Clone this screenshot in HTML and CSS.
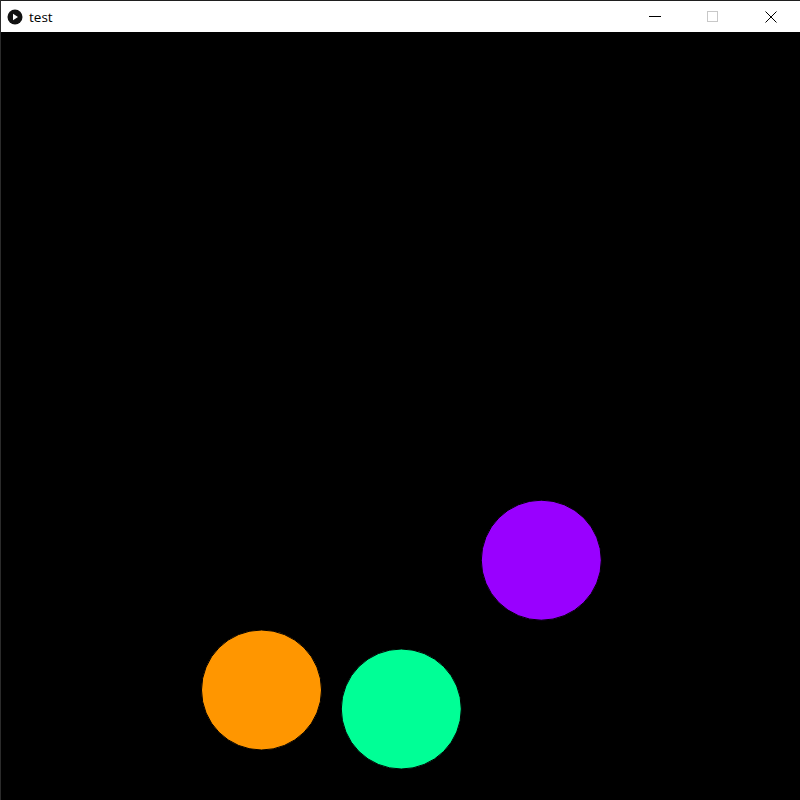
FILE: index.html
```html
<!DOCTYPE html>
<html>
<head>
<meta charset="utf-8">
<link rel="stylesheet" href="styles.css">
</head>
<body>
<div class="window">
  <div class="titlebar">
    <div class="title">
      <svg class="app-icon" width="16" height="16" viewBox="0 0 16 16">
        <circle cx="8" cy="8" r="7.5" fill="#111"/>
        <path d="M6 4.8 L11 8 L6 11.2 Z" fill="#fff"/>
      </svg>
      <span class="title-text">test</span>
    </div>
    <div class="controls">
      <div class="ctrl">
        <svg width="12" height="12" viewBox="0 0 12 12"><path d="M0 5.5 H12" stroke="#000" stroke-width="1"/></svg>
      </div>
      <div class="ctrl">
        <svg width="12" height="12" viewBox="0 0 12 12"><rect x="0.5" y="0.5" width="10" height="10" fill="none" stroke="#c8c8c8" stroke-width="1"/></svg>
      </div>
      <div class="ctrl">
        <svg width="12" height="12" viewBox="0 0 12 12"><path d="M0.5 0.5 L11.5 11.5 M11.5 0.5 L0.5 11.5" stroke="#000" stroke-width="1"/></svg>
      </div>
    </div>
  </div>
  <svg class="canvas" width="799" height="768" viewBox="1 32 799 768">
    <circle cx="541.3" cy="560.2" r="60" fill="#9900ff" stroke="#000" stroke-width="1"/>
    <circle cx="261.5" cy="690" r="60" fill="#ff9600" stroke="#000" stroke-width="1"/>
    <circle cx="401.3" cy="709" r="60" fill="#00ff96" stroke="#000" stroke-width="1"/>
  </svg>
</div>
</body>
</html>
```

FILE: styles.css
```css
html, body {
  margin: 0;
  padding: 0;
  background: #000;
  overflow: hidden;
}
.window {
  width: 800px;
  height: 800px;
  display: flex;
  flex-direction: column;
  border-left: 1px solid #2b2b2b;
  box-sizing: border-box;
  background: #000;
}
.titlebar {
  height: 31px;
  border-top: 1px solid #1f1f1f;
  background: #fff;
  display: flex;
  align-items: center;
  justify-content: space-between;
  flex: none;
}
.title {
  display: flex;
  align-items: center;
  padding-left: 6px;
  gap: 6px;
}
.app-icon {
  display: block;
}
.title-text {
  font-family: "Open Sans", "Noto Sans", sans-serif;
  font-size: 13.5px;
  color: #000;
  line-height: 16px;
}
.controls {
  display: flex;
  height: 100%;
}
.ctrl {
  width: 58px;
  height: 100%;
  display: flex;
  align-items: center;
  justify-content: center;
}
.ctrl svg {
  display: block;
}
.canvas {
  display: block;
  flex: none;
}
```
